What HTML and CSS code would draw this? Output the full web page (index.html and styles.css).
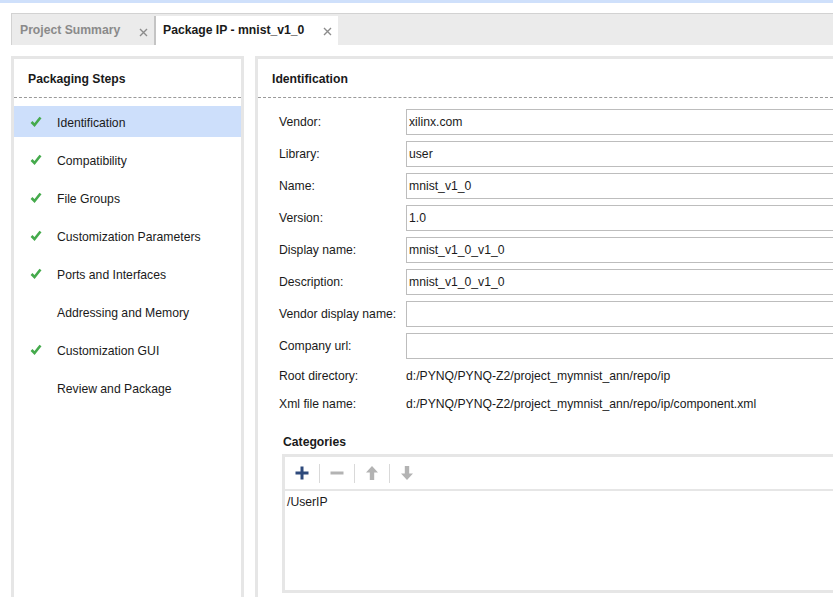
FILE: index.html
```html
<!DOCTYPE html>
<html>
<head>
<meta charset="utf-8">
<link rel="stylesheet" href="styles.css">
</head>
<body>
<div class="topband"></div>
<div class="app">
  <div class="tabbar">
    <div class="tab">
      <span class="tab-title muted">Project Summary</span>
      <svg class="close" width="9" height="9" viewBox="0 0 9 9"><path d="M1 1L8 8M8 1L1 8" stroke="#8c8c8c" stroke-width="1.4"/></svg>
    </div>
    <div class="tab active">
      <span class="tab-title">Package IP - mnist_v1_0</span>
      <svg class="close" width="9" height="9" viewBox="0 0 9 9"><path d="M1 1L8 8M8 1L1 8" stroke="#8c8c8c" stroke-width="1.4"/></svg>
    </div>
  </div>
  <div class="content">
    <div class="panel left">
      <div class="panel-head">Packaging Steps</div>
      <ul class="steps">
        <li class="step selected"><span class="chk"><svg width="12" height="11" viewBox="0 0 12 11"><path d="M1.5 6L4.5 9L10.5 1.5" fill="none" stroke="#45aa4c" stroke-width="2.6"/></svg></span>Identification</li>
        <li class="step"><span class="chk"><svg width="12" height="11" viewBox="0 0 12 11"><path d="M1.5 6L4.5 9L10.5 1.5" fill="none" stroke="#45aa4c" stroke-width="2.6"/></svg></span>Compatibility</li>
        <li class="step"><span class="chk"><svg width="12" height="11" viewBox="0 0 12 11"><path d="M1.5 6L4.5 9L10.5 1.5" fill="none" stroke="#45aa4c" stroke-width="2.6"/></svg></span>File Groups</li>
        <li class="step"><span class="chk"><svg width="12" height="11" viewBox="0 0 12 11"><path d="M1.5 6L4.5 9L10.5 1.5" fill="none" stroke="#45aa4c" stroke-width="2.6"/></svg></span>Customization Parameters</li>
        <li class="step"><span class="chk"><svg width="12" height="11" viewBox="0 0 12 11"><path d="M1.5 6L4.5 9L10.5 1.5" fill="none" stroke="#45aa4c" stroke-width="2.6"/></svg></span>Ports and Interfaces</li>
        <li class="step"><span class="chk"></span>Addressing and Memory</li>
        <li class="step"><span class="chk"><svg width="12" height="11" viewBox="0 0 12 11"><path d="M1.5 6L4.5 9L10.5 1.5" fill="none" stroke="#45aa4c" stroke-width="2.6"/></svg></span>Customization GUI</li>
        <li class="step"><span class="chk"></span>Review and Package</li>
      </ul>
    </div>
    <div class="panel right">
      <div class="panel-head">Identification</div>
      <div class="form">
        <div class="row"><span class="lbl">Vendor:</span><div class="field">xilinx.com</div></div>
        <div class="row"><span class="lbl">Library:</span><div class="field">user</div></div>
        <div class="row"><span class="lbl">Name:</span><div class="field">mnist_v1_0</div></div>
        <div class="row"><span class="lbl">Version:</span><div class="field">1.0</div></div>
        <div class="row"><span class="lbl">Display name:</span><div class="field">mnist_v1_0_v1_0</div></div>
        <div class="row"><span class="lbl">Description:</span><div class="field">mnist_v1_0_v1_0</div></div>
        <div class="row"><span class="lbl">Vendor display name:</span><div class="field"></div></div>
        <div class="row"><span class="lbl">Company url:</span><div class="field"></div></div>
        <div class="row text"><span class="lbl">Root directory:</span><span class="val">d:/PYNQ/PYNQ-Z2/project_mymnist_ann/repo/ip</span></div>
        <div class="row text"><span class="lbl">Xml file name:</span><span class="val">d:/PYNQ/PYNQ-Z2/project_mymnist_ann/repo/ip/component.xml</span></div>
      </div>
      <div class="categories">
        <div class="cat-title">Categories</div>
        <div class="cat-box">
          <div class="toolbar">
            <div class="tbtn"><svg width="16" height="16" viewBox="0 0 16 16"><path d="M8 1.5V14.5M1.5 8H14.5" stroke="#2e4a7c" stroke-width="3"/></svg></div>
            <div class="tbtn"><svg width="16" height="16" viewBox="0 0 16 16"><path d="M1.5 8H14.5" stroke="#b3b3b3" stroke-width="3"/></svg></div>
            <div class="tbtn"><svg width="16" height="16" viewBox="0 0 16 16"><path d="M8 1L14 7.5H10.2V15H5.8V7.5H2Z" fill="#b3b3b3"/></svg></div>
            <div class="tbtn"><svg width="16" height="16" viewBox="0 0 16 16"><path d="M8 15L14 8.5H10.2V1H5.8V8.5H2Z" fill="#b3b3b3"/></svg></div>
          </div>
          <div class="cat-list">/UserIP</div>
        </div>
      </div>
    </div>
  </div>
</div>
</body>
</html>
```

FILE: styles.css
```css
html, body {
  margin: 0;
  padding: 0;
  background: #ffffff;
  overflow: hidden;
}
body {
  font-family: "Liberation Sans", Arial, sans-serif;
  font-size: 12.2px;
  color: #1a1a1a;
  width: 833px;
  height: 597px;
}
.topband {
  height: 3px;
  background: #cfe0fb;
}
.app {
  margin-top: 10px;
  margin-left: 11px;
  display: flex;
  flex-direction: column;
  height: 584px;
}
.tabbar {
  height: 32px;
  background: #ebebeb;
  border-top: 1px solid #d2d2d2;
  border-left: 1px solid #d2d2d2;
  display: flex;
  align-items: flex-end;
  box-sizing: border-box;
  flex-shrink: 0;
}
.tab {
  height: 29px;
  display: flex;
  align-items: center;
  padding-left: 8px;
  font-weight: bold;
  box-sizing: border-box;
}
.tab:first-child {
  width: 144px;
  border-right: 2px solid #c4c4c4;
}
.tab.active {
  width: 182px;
  background: #ffffff;
  padding-left: 7px;
}
.tab-title {
  flex: 1;
  position: relative;
  top: -1px;
}
.tab-title.muted {
  color: #8a8a8a;
}
.close {
  margin-right: 6px;
  margin-top: 3px;
}
.tab.active .close {
  margin-right: 6px;
  margin-top: 2px;
}
.content {
  flex: 1;
  display: flex;
  padding-top: 11px;
  gap: 11px;
  min-height: 0;
}
.panel {
  border-top: 3px solid #e6e6e6;
  border-left: 3px solid #e6e6e6;
  background: #ffffff;
  box-sizing: border-box;
  overflow: hidden;
}
.panel.left {
  width: 233px;
  border-right: 3px solid #e6e6e6;
  flex-shrink: 0;
}
.panel.right {
  flex: 1;
}
.panel-head {
  height: 39px;
  border-bottom: 1px dashed #9a9a9a;
  box-sizing: border-box;
  display: flex;
  align-items: center;
  padding-left: 14px;
  font-weight: bold;
  padding-top: 1px;
}
.steps {
  list-style: none;
  margin: 8px 0 0 0;
  padding: 0;
  display: flex;
  flex-direction: column;
  gap: 7px;
}
.step {
  height: 31px;
  display: flex;
  align-items: center;
  padding-left: 16px;
  padding-top: 2px;
  box-sizing: border-box;
}
.step.selected {
  background: #cddffb;
  margin-right: -1px;
}
.chk {
  width: 27px;
  height: 11px;
  display: flex;
  align-items: center;
  position: relative;
  top: -1px;
}
.form {
  padding: 11px 0 0 21px;
  display: flex;
  flex-direction: column;
  gap: 6px;
}
.row {
  display: flex;
  align-items: center;
  height: 26px;
}
.row.text {
  height: 22px;
}
.lbl {
  width: 127px;
  flex-shrink: 0;
}
.field {
  width: 700px;
  height: 26px;
  border: 1px solid #bdbdbd;
  box-sizing: border-box;
  padding-left: 2px;
  display: flex;
  align-items: center;
  flex-shrink: 0;
}
.val {
  white-space: nowrap;
}
.categories {
  padding: 19px 0 0 24px;
}
.cat-title {
  font-weight: bold;
  height: 16px;
  line-height: 16px;
  padding-left: 1px;
  margin-bottom: 4px;
}
.cat-box {
  border: 3px solid #e6e6e6;
  border-right: none;
  width: 700px;
}
.toolbar {
  height: 32px;
  border-bottom: 2px solid #e6e6e6;
  display: flex;
  align-items: center;
}
.tbtn {
  width: 34px;
  height: 19px;
  border-right: 1px solid #d9d9d9;
  display: flex;
  align-items: center;
  justify-content: center;
}
.tbtn:last-child {
  border-right: none;
}
.cat-list {
  height: 99px;
  box-sizing: border-box;
  padding: 4px 0 0 2px;
  line-height: 14px;
}
```
